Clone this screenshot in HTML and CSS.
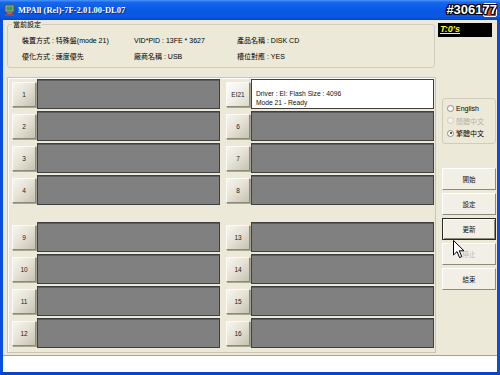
FILE: index.html
```html
<!DOCTYPE html>
<html>
<head>
<meta charset="utf-8">
<link rel="stylesheet" href="styles.css">
</head>
<body>
<div class="window">
  <div class="titlebar">
    <svg class="app-icon" width="11" height="12" viewBox="0 0 11 12">
      <rect x="1" y="1" width="9" height="7" fill="#9aa6a0" stroke="#4a5a50" stroke-width="1"/>
      <rect x="2.5" y="2.5" width="6" height="4" fill="#3f9b4a"/>
      <rect x="3" y="8" width="5" height="2" fill="#7a7a70"/>
      <rect x="1" y="10" width="9" height="2" fill="#c03a2b"/>
    </svg>
    <span class="title">MPAll (Rel)-7F-2.01.00-DL07</span>
    <span class="close-btn"></span>
    <span class="serial">#306177</span>
  </div>
  <div class="client">
    <div class="top">
      <fieldset class="current">
        <legend>當前設定</legend>
        <div class="info">
          <span>裝置方式 : 特殊盤(mode 21)</span>
          <span>VID*PID : 13FE * 3627</span>
          <span>產品名稱 : DISK CD</span>
          <span>優化方式 : 速度優先</span>
          <span>廠商名稱 : USB</span>
          <span>槽位對應 : YES</span>
        </div>
      </fieldset>
      <div class="timer"><span>T:0's</span></div>
    </div>
    <div class="middle">
      <div class="panel">
        <div class="bank">
          <div class="slot"><span class="slot-btn">1</span><span class="bar"></span></div>
          <div class="slot"><span class="slot-btn hot">EI21</span><span class="bar info-bar">Driver : EI: Flash Size : 4096<br>Mode 21 - Ready</span></div>
          <div class="slot"><span class="slot-btn">2</span><span class="bar"></span></div>
          <div class="slot"><span class="slot-btn">6</span><span class="bar"></span></div>
          <div class="slot"><span class="slot-btn">3</span><span class="bar"></span></div>
          <div class="slot"><span class="slot-btn">7</span><span class="bar"></span></div>
          <div class="slot"><span class="slot-btn">4</span><span class="bar"></span></div>
          <div class="slot"><span class="slot-btn">8</span><span class="bar"></span></div>
        </div>
        <div class="bank bank-low">
          <div class="slot"><span class="slot-btn">9</span><span class="bar"></span></div>
          <div class="slot"><span class="slot-btn">13</span><span class="bar"></span></div>
          <div class="slot"><span class="slot-btn">10</span><span class="bar"></span></div>
          <div class="slot"><span class="slot-btn">14</span><span class="bar"></span></div>
          <div class="slot"><span class="slot-btn">11</span><span class="bar"></span></div>
          <div class="slot"><span class="slot-btn">15</span><span class="bar"></span></div>
          <div class="slot"><span class="slot-btn">12</span><span class="bar"></span></div>
          <div class="slot"><span class="slot-btn">16</span><span class="bar"></span></div>
        </div>
      </div>
      <div class="side">
        <div class="lang">
          <div class="radio"><span class="dot"></span>English</div>
          <div class="radio disabled"><span class="dot"></span>簡體中文</div>
          <div class="radio checked"><span class="dot"></span>繁體中文</div>
        </div>
        <div class="actions">
          <span class="act">開始</span>
          <span class="act">設定</span>
          <span class="act focus">更新</span>
          <span class="act disabled">停止</span>
          <span class="act">結束</span>
        </div>
      </div>
    </div>
    <div class="status"></div>
  </div>
  <svg class="cursor" width="12" height="19" viewBox="0 0 12 19">
    <path d="M0.5 0.5 L0.5 15 L4 11.6 L6.6 17.6 L8.8 16.6 L6.3 10.8 L11 10.8 Z" fill="#fff" stroke="#000" stroke-width="1" stroke-linejoin="miter"/>
  </svg>
</div>
</body>
</html>
```

FILE: styles.css
```css
* { box-sizing: border-box; }
html, body { margin: 0; padding: 0; }
body { width: 500px; height: 375px; overflow: hidden; background: #ece9d8; }

.window {
  position: relative;
  width: 500px;
  height: 375px;
  display: flex;
  flex-direction: column;
  font-family: "Liberation Sans", "Noto Sans CJK TC", sans-serif;
  font-size: 7px;
  color: #000;
}

.titlebar {
  height: 20px;
  display: flex;
  align-items: center;
  background: linear-gradient(#4a97fa 0%, #1766ec 12%, #0758e4 50%, #0a58e2 85%, #0445c8 100%);
  padding-left: 4px;
  position: relative;
}
.app-icon { flex: none; margin-right: 3px; }
.title {
  font-family: "Liberation Serif", serif;
  font-weight: bold;
  font-size: 8.5px;
  color: #fff;
  text-shadow: 1px 1px 0 #0a2d8a;
}
.close-btn {
  margin-left: auto;
  margin-right: 3px;
  width: 14px;
  height: 14px;
  border: 1px solid #fff;
  border-radius: 2px;
  background: linear-gradient(135deg, #e9826a, #d8492b 60%, #b7341c);
}
.serial {
  position: absolute;
  right: 3px;
  top: 2px;
  font-family: "Liberation Sans", sans-serif;
  font-weight: bold;
  font-size: 13px;
  line-height: 16px;
  color: #fff;
  text-shadow: -1px 0 #000, 1px 0 #000, 0 -1px #000, 0 1px #000, 1px 1px #000, -1px -1px #000, 1px -1px #000, -1px 1px #000;
}

.client {
  flex: 1;
  display: flex;
  flex-direction: column;
  border-left: 3px solid #0a4fdc;
  border-right: 3px solid #0a4fdc;
  border-bottom: 3px solid #0a45c8;
  background: #ece9d8;
}

.top {
  height: 48px;
  display: flex;
  align-items: flex-start;
}
.current {
  margin: 0 0 0 4px;
  width: 428px;
  padding: 0 0 3px 4px;
  border: 1px solid #d0cdbd;
  border-radius: 3px;
}
.current legend {
  padding: 0 1px;
  font-size: 7px;
  line-height: 9px;
}
.info {
  margin: 3px 0 0 10px;
  display: grid;
  grid-template-columns: 112px 103px auto;
  grid-auto-rows: 16px;
  align-items: center;
  white-space: nowrap;
}
.timer {
  margin: 3px 0 0 3px;
  width: 54px;
  height: 14px;
  background: #000;
  padding-left: 2px;
}
.timer span {
  font-family: "Liberation Sans", sans-serif;
  font-weight: bold;
  font-style: italic;
  font-size: 9px;
  line-height: 13px;
  color: #ffff00;
  text-decoration: underline;
}

.middle {
  margin-top: 9px;
  display: flex;
  align-items: flex-start;
}
.panel {
  margin-left: 4px;
  width: 429px;
  padding: 1px 1px 4px 4px;
  border: 1px solid #c8c5b4;
  box-shadow: inset 1px 1px 0 #fff;
}
.bank {
  display: grid;
  grid-template-columns: 208px 208px;
  grid-auto-rows: 30px;
  column-gap: 6px;
  row-gap: 2px;
}
.bank-low { margin-top: 17px; }
.slot {
  display: flex;
  align-items: flex-start;
}
.slot-btn {
  flex: none;
  width: 24px;
  height: 25px;
  margin-top: 3px;
  margin-right: 1px;
  display: flex;
  align-items: center;
  justify-content: center;
  font-size: 6.5px;
  color: #222;
  border: 1px solid;
  border-color: #fbfaf6 #8d8a7b #8d8a7b #fbfaf6;
  background: linear-gradient(135deg, #f6f5f0 0%, #e6e3d7 45%, #c6c2b1 100%);
  box-shadow: 1px 1px 0 #a9a594;
}
.slot-btn.hot {
  background: linear-gradient(135deg, #fdfdfb 0%, #f1efe7 50%, #dcd8ca 100%);
}
.bar {
  flex: 1;
  height: 30px;
  background: #808080;
  border: 1px solid #3f3f3f;
  box-shadow: inset 0 1px 0 #5c5c5c;
}
.info-bar {
  background: #fff;
  box-shadow: none;
  padding: 9px 0 0 4px;
  font-size: 6.7px;
  line-height: 9px;
  color: #111;
  white-space: nowrap;
}

.side {
  margin-left: 6px;
  width: 54px;
  display: flex;
  flex-direction: column;
}
.lang {
  margin-top: 21px;
  height: 46px;
  border: 1px solid #d0cdbd;
  border-radius: 3px;
  padding: 3px 0 0 4px;
}
.radio {
  height: 12.5px;
  display: flex;
  align-items: center;
  font-size: 7px;
  white-space: nowrap;
}
.radio .dot {
  width: 7px;
  height: 7px;
  border-radius: 50%;
  border: 1px solid #8a8a8a;
  background: #fff;
  margin-right: 2px;
  position: relative;
  flex: none;
}
.radio.disabled { color: #b5b2a5; }
.radio.disabled .dot { border-color: #cfccc0; background: #f3f2ec; }
.radio.checked .dot::after {
  content: "";
  position: absolute;
  left: 1.5px;
  top: 1.5px;
  width: 2px;
  height: 2px;
  border-radius: 50%;
  background: #222;
}

.actions {
  margin-top: 24px;
  display: flex;
  flex-direction: column;
  gap: 3px;
}
.act {
  height: 22px;
  display: flex;
  align-items: center;
  justify-content: center;
  font-size: 6.5px;
  color: #111;
  border: 1px solid;
  border-color: #fff #8d8a7b #8d8a7b #fff;
  background: #f1efe6;
}
.act.focus {
  border: 1px solid #2a2a2a;
  box-shadow: inset 1px 1px 0 #fff, inset -1px -1px 0 #8d8a7b;
}
.act.disabled { color: #b9b6a9; }

.status {
  flex: 1;
  margin-top: 2px;
  border-top: 1px solid #a7a390;
  background: #fff;
}

.cursor {
  position: absolute;
  left: 453px;
  top: 240px;
}
```
